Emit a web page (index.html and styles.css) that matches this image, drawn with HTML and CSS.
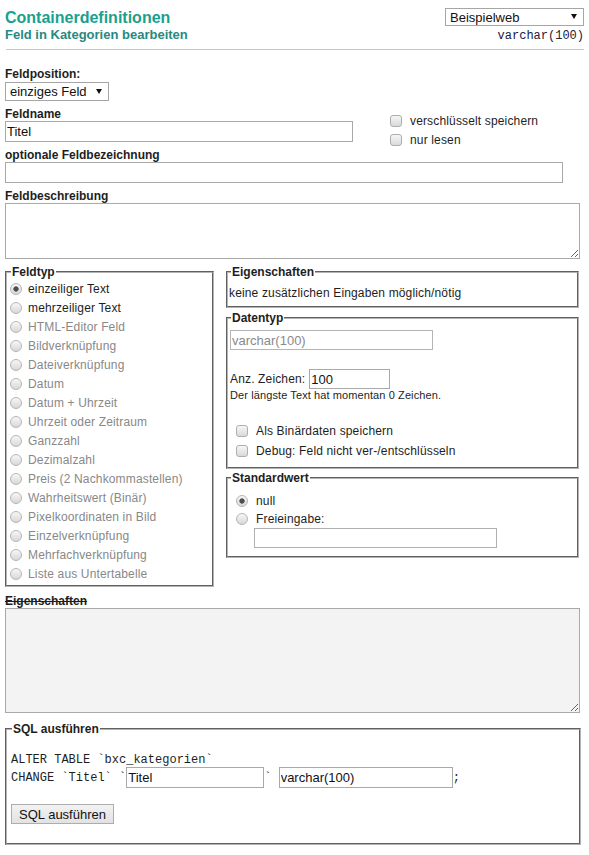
FILE: index.html
```html
<!DOCTYPE html>
<html lang="de">
<head>
  <meta charset="UTF-8" />
  <title>Containerdefinitionen</title>
  <link rel="stylesheet" href="styles.css">
</head>
<body>
  <div class="page">
    <header class="top">
      <div class="titles">
        <h1>Containerdefinitionen</h1>
        <h2>Feld in Kategorien bearbeiten</h2>
      </div>
      <div class="project">
        <span class="select wide"><select><option>Beispielweb</option></select></span>
        <code class="coltype">varchar(100)</code>
      </div>
    </header>
    <hr class="sep">

    <form class="edit">
      <label class="lbl first">Feldposition:</label>
      <span class="select small"><select><option>einziges Feld</option></select></span>

      <div class="name-row">
        <div class="name-col">
          <label class="lbl">Feldname</label>
          <input class="inp name" type="text" value="Titel">
        </div>
        <div class="flags">
          <label class="chk"><input type="checkbox"> verschlüsselt speichern</label>
          <label class="chk"><input type="checkbox"> nur lesen</label>
        </div>
      </div>

      <label class="lbl">optionale Feldbezeichnung</label>
      <input class="inp caption" type="text">

      <label class="lbl">Feldbeschreibung</label>
      <textarea class="area desc"></textarea>

      <div class="cols">
        <fieldset class="box types">
          <legend>Feldtyp</legend>
          <label class="opt"><input type="radio" name="typ" checked> einzeiliger Text</label>
          <label class="opt"><input type="radio" name="typ"> mehrzeiliger Text</label>
          <label class="opt off"><input type="radio" name="typ" disabled> HTML-Editor Feld</label>
          <label class="opt off"><input type="radio" name="typ" disabled> Bildverknüpfung</label>
          <label class="opt off"><input type="radio" name="typ" disabled> Dateiverknüpfung</label>
          <label class="opt off"><input type="radio" name="typ" disabled> Datum</label>
          <label class="opt off"><input type="radio" name="typ" disabled> Datum + Uhrzeit</label>
          <label class="opt off"><input type="radio" name="typ" disabled> Uhrzeit oder Zeitraum</label>
          <label class="opt off"><input type="radio" name="typ" disabled> Ganzzahl</label>
          <label class="opt off"><input type="radio" name="typ" disabled> Dezimalzahl</label>
          <label class="opt off"><input type="radio" name="typ" disabled> Preis (2 Nachkommastellen)</label>
          <label class="opt off"><input type="radio" name="typ" disabled> Wahrheitswert (Binär)</label>
          <label class="opt off"><input type="radio" name="typ" disabled> Pixelkoordinaten in Bild</label>
          <label class="opt off"><input type="radio" name="typ" disabled> Einzelverknüpfung</label>
          <label class="opt off"><input type="radio" name="typ" disabled> Mehrfachverknüpfung</label>
          <label class="opt off"><input type="radio" name="typ" disabled> Liste aus Untertabelle</label>
        </fieldset>

        <div class="side">
          <fieldset class="box props">
            <legend>Eigenschaften</legend>
            <div class="note">keine zusätzlichen Eingaben möglich/nötig</div>
          </fieldset>

          <fieldset class="box dtype">
            <legend>Datentyp</legend>
            <input class="inp sqltype" type="text" value="varchar(100)" disabled>
            <div class="len-row">
              <span>Anz. Zeichen:</span>
              <input class="inp len" type="text" value="100">
            </div>
            <div class="hint">Der längste Text hat momentan 0 Zeichen.</div>
            <label class="chk row"><input type="checkbox"> Als Binärdaten speichern</label>
            <label class="chk row"><input type="checkbox"> Debug: Feld nicht ver-/entschlüsseln</label>
          </fieldset>

          <fieldset class="box defval">
            <legend>Standardwert</legend>
            <label class="opt"><input type="radio" name="def" checked> null</label>
            <label class="opt"><input type="radio" name="def"> Freieingabe:</label>
            <input class="inp free" type="text">
          </fieldset>
        </div>
      </div>

      <label class="lbl struck">Eigenschaften</label>
      <textarea class="area props-area"></textarea>

      <fieldset class="box sql">
        <legend>SQL ausführen</legend>
        <div class="sql-line">ALTER TABLE `bxc_kategorien`</div>
        <div class="sql-line change">
          <span>CHANGE `Titel` `</span><input class="inp sqlname" type="text" value="Titel"><span>` </span><input class="inp sqldef" type="text" value="varchar(100)"><span>;</span>
        </div>
        <button type="button" class="btn">SQL ausführen</button>
      </fieldset>
    </form>
  </div>
</body>
</html>
```

FILE: styles.css
```css
body { margin: 0; font-family: "Liberation Sans", Arial, sans-serif; font-size: 12px; line-height: 14px; letter-spacing: 0.15px; color: #1e1e1e; background: #fff; }
.page { width: 579px; padding: 0 5px; }

.top { display: flex; justify-content: space-between; align-items: flex-start; letter-spacing: 0; }
.titles { padding-top: 9px; }
.titles h1 { margin: 0; font-size: 16px; line-height: 18px; color: #19a08f; }
.titles h2 { margin: 0; font-size: 13px; line-height: 15px; color: #27897f; }
.project { display: flex; flex-direction: column; align-items: flex-end; padding-top: 8px; }
.coltype { font-family: "Liberation Mono", monospace; font-size: 12px; line-height: 14px; color: #202038; margin-top: 3px; }
.sep { margin: 6px 0 0 1px; border: 0; border-top: 1px solid #c6c6c6; height: 0; }

.select { position: relative; display: inline-block; }
.select select { appearance: none; -webkit-appearance: none; display: block; margin: 0; border: 1px solid #a6a6a6; border-radius: 0; background: #fff; font-family: "Liberation Sans", Arial, sans-serif; font-size: 13px; color: #111; padding: 0 0 0 4px; box-sizing: border-box; }
.select::after { content: ""; position: absolute; top: 6px; right: 7px; border-left: 3px solid transparent; border-right: 3px solid transparent; border-top: 5px solid #111; }
.select.wide select { width: 139px; height: 18px; }
.select.small select { width: 104px; height: 19px; }
.select.small::after { top: 7px; }

.edit { display: block; }
.lbl, legend { letter-spacing: 0; }
.lbl { display: block; font-weight: bold; line-height: 14px; }
.lbl.first { margin-top: 17px; }
.select.small { margin-top: 1px; }

.inp { display: block; box-sizing: border-box; margin: 0; border: 1px solid #a9a9a9; border-radius: 0; padding: 0 1px; height: 21px; font-family: "Liberation Sans", Arial, sans-serif; font-size: 13px; color: #111; background: #fff; }
.area { display: block; box-sizing: border-box; margin: 0; border: 1px solid #a9a9a9; font-family: "Liberation Sans", Arial, sans-serif; font-size: 13px; }

.name-row { display: flex; align-items: flex-start; height: 35px; margin-top: 6px; }
.name-col { width: 348px; }
.inp.name { width: 348px; }
.flags { margin: 4px 0 0 37px; }
.chk { display: flex; align-items: center; height: 19px; gap: 8px; }

.inp.caption { width: 558px; }
.name-row + .lbl { margin-top: 6px; }
.inp.caption + .lbl { margin-top: 6px; }
.area.desc { width: 575px; height: 56px; }

input[type=checkbox] { appearance: none; -webkit-appearance: none; width: 12px; height: 12px; margin: 0; border: 1px solid #aeaeae; border-radius: 3px; background: linear-gradient(#f6f6f6, #dadada); box-sizing: border-box; flex: none; }
input[type=radio] { appearance: none; -webkit-appearance: none; width: 12px; height: 12px; margin: 0; border: 1px solid #b6b6b6; border-radius: 50%; background: linear-gradient(#f7f7f7, #d8d8d8); box-sizing: border-box; flex: none; }
input[type=radio]:checked { background: radial-gradient(circle, #4f4f4f 0 2.3px, transparent 3px), linear-gradient(#f7f7f7, #d8d8d8); }

.cols { display: flex; align-items: flex-start; margin-top: 6px; }
.box { margin: 0; border: 2px groove #b4b4b4; min-width: 0; }
.box legend { font-weight: bold; line-height: 14px; padding: 0 1px; }

.types { width: 209px; box-sizing: border-box; padding: 0 0 2px 3px; }
.types legend { margin-left: 1px; }
.opt { display: flex; align-items: center; height: 19px; gap: 6px; }
.opt.off { color: #888; }

.side { margin-left: 12px; width: 353px; }
.side .box { box-sizing: border-box; width: 353px; }
.props { padding: 7px 2px 6px 1px; margin-bottom: 3px; }
.props legend { margin-left: 2px; }
.dtype { padding: 5px 2px 6px 2px; margin-bottom: 2px; }
.dtype legend { margin-left: 1px; }
.inp.sqltype { width: 203px; height: 20px; color: #8a8a8a; background: #fff; border-color: #b5b5b5; }
.len-row { display: flex; align-items: center; margin-top: 19px; gap: 4px; }
.inp.len { width: 81px; height: 20px; }
.hint { font-size: 11px; line-height: 13px; letter-spacing: 0.1px; }
.chk.row { height: 20px; padding-left: 6px; }
.hint + .chk.row { margin-top: 19px; }
.defval { padding: 7px 2px 8px 2px; }
.defval legend { margin-left: 1px; }
.defval .opt { height: 18px; padding-left: 6px; gap: 8px; }
.inp.free { width: 243px; height: 20px; margin-left: 24px; border-color: #b0b0b0; }

.struck { text-decoration: line-through; margin-top: 7px; }
.area.props-area { width: 575px; height: 105px; background: #f3f3f3; }

.sql { width: 576px; box-sizing: border-box; margin-top: 9px; padding: 17px 4px 19px 4px; }
.sql legend { margin-left: 1px; }
.sql-line { font-family: "Liberation Mono", monospace; font-size: 12px; line-height: 14px; white-space: pre; letter-spacing: 0; }
.sql-line.change { display: flex; align-items: center; height: 21px; }
.inp.sqlname { width: 138px; }
.inp.sqldef { width: 174px; }
.btn { display: block; margin-top: 16px; height: 20px; width: 103px; padding: 0; font-family: "Liberation Sans", Arial, sans-serif; font-size: 13px; color: #111; border: 1px solid #adadad; border-radius: 0; background: linear-gradient(#f2f2f2, #e2e2e2); }
```
